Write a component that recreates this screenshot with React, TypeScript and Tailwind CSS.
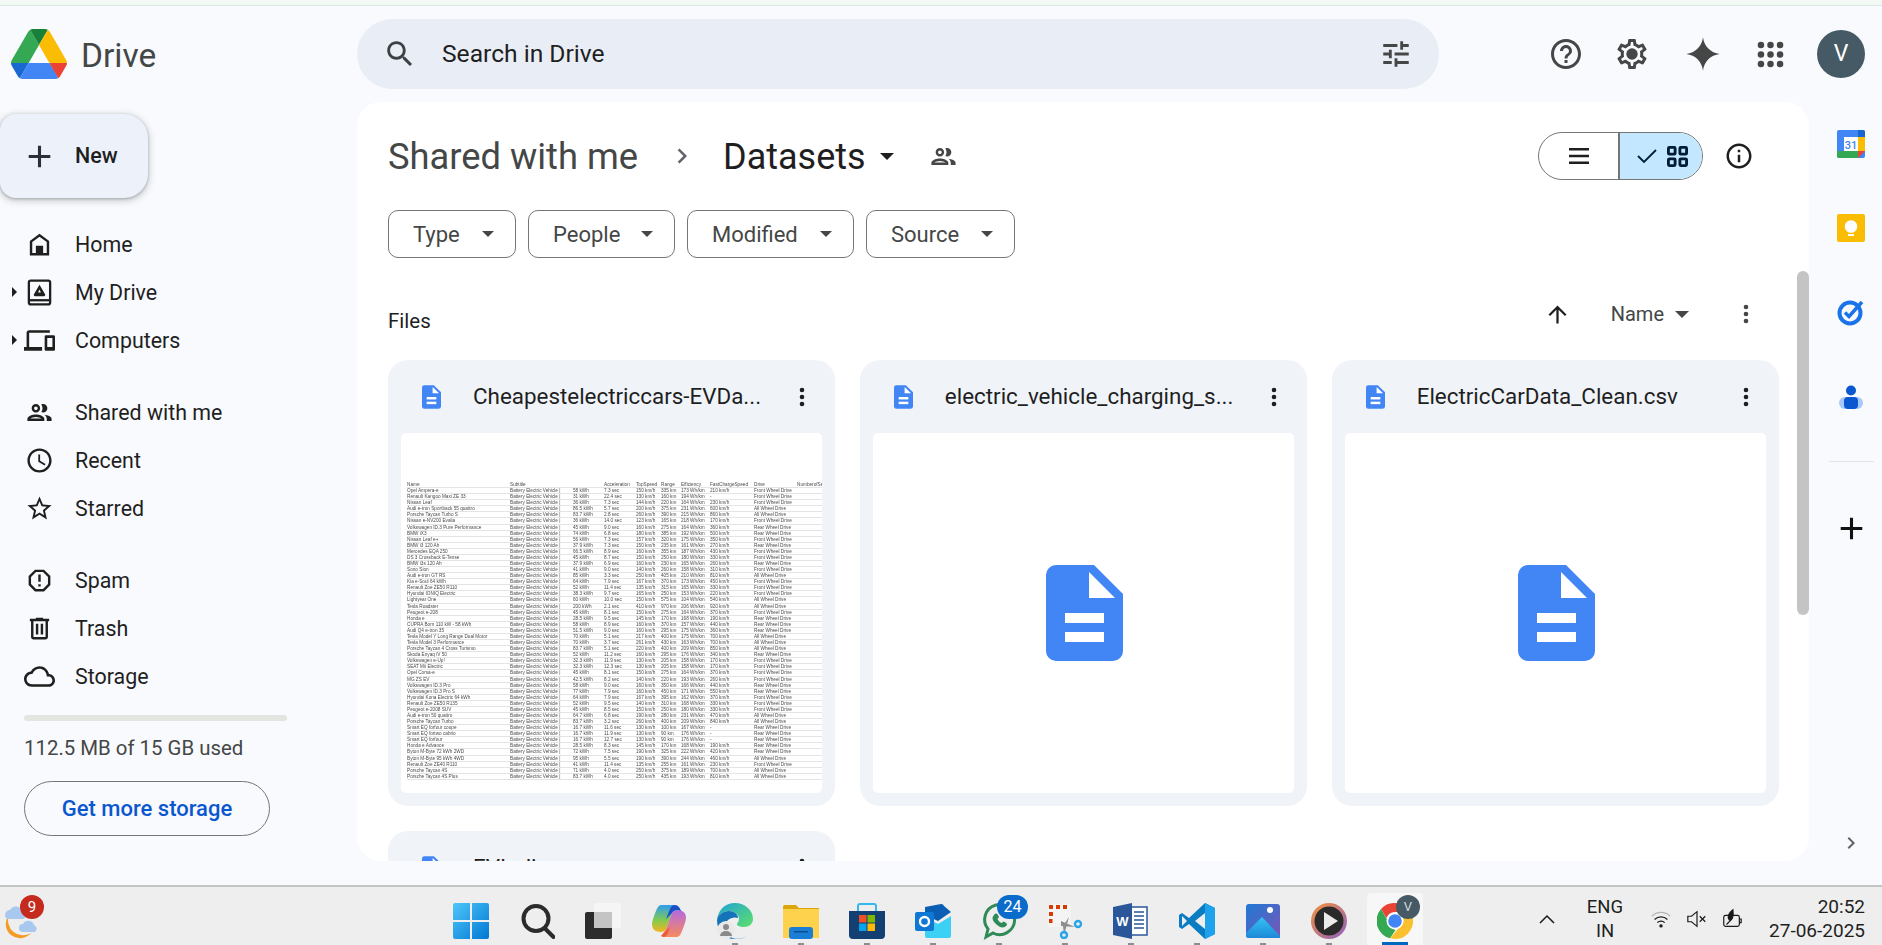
import React from "react";

const P = {
  home: "M12 3 4 9v12h16V9l-8-6zm6 16h-3v-6H9v6H6v-9l6-4.5 6 4.5v9z",
  devices: "M4 6h16V4H4c-1.1 0-2 .9-2 2v11H0v3h14v-3H4V6zm19 2h-6c-.55 0-1 .45-1 1v10c0 .55.45 1 1 1h6c.55 0 1-.45 1-1V9c0-.55-.45-1-1-1zm-1 9h-4v-7h4v7z",
  people: "M9 13.75c-2.34 0-7 1.17-7 3.5V19h14v-1.75c0-2.33-4.66-3.5-7-3.5zM4.34 17c.84-.58 2.87-1.25 4.66-1.25s3.82.67 4.66 1.25H4.34zM9 12c1.93 0 3.5-1.57 3.5-3.5S10.93 5 9 5 5.5 6.57 5.5 8.5 7.07 12 9 12zm0-5c.83 0 1.5.67 1.5 1.5S9.83 10 9 10s-1.5-.67-1.5-1.5S8.17 7 9 7zm7.04 6.81c1.16.84 1.96 1.96 1.96 3.44V19h4v-1.75c0-2.02-3.5-3.17-5.96-3.44zM15 12c1.93 0 3.5-1.57 3.5-3.5S16.93 5 15 5c-.54 0-1.04.13-1.5.35.63.89 1 1.98 1 3.15s-.37 2.26-1 3.15c.46.22.96.35 1.5.35z",
  clock: "M11.99 2C6.47 2 2 6.48 2 12s4.47 10 9.99 10C17.52 22 22 17.52 22 12S17.52 2 11.99 2zM12 20c-4.42 0-8-3.58-8-8s3.58-8 8-8 8 3.58 8 8-3.58 8-8 8zm.5-13H11v6l5.25 3.15.75-1.23-4.5-2.67z",
  star: "M22 9.24l-7.19-.62L12 2 9.19 8.63 2 9.24l5.46 4.73L5.82 21 12 17.27 18.18 21l-1.63-7.03L22 9.24zM12 15.4l-3.76 2.27 1-4.28-3.32-2.88 4.38-.38L12 6.1l1.71 4.04 4.38.38-3.32 2.88 1 4.28L12 15.4z",
  spam: "M15.73 3H8.27L3 8.27v7.46L8.27 21h7.46L21 15.73V8.27L15.73 3zM19 14.9 14.9 19H9.1L5 14.9V9.1L9.1 5h5.8L19 9.1v5.8zM11 7h2v6h-2zM11 15h2v2h-2z",
  trash: "M15 4V3H9v1H4v2h1v13c0 1.1.9 2 2 2h10c1.1 0 2-.9 2-2V6h1V4h-5zm2 15H7V6h10v13zM9 8h2v9H9zm4 0h2v9h-2z",
  cloud: "M12 6c2.62 0 4.88 1.86 5.39 4.43l.3 1.5 1.53.11c1.56.1 2.78 1.41 2.78 2.96 0 1.65-1.35 3-3 3H6c-2.21 0-4-1.79-4-4 0-2.05 1.53-3.76 3.56-3.97l1.07-.11.5-.95C8.08 7.14 9.94 6 12 6m0-2C9.11 4 6.6 5.64 5.35 8.04 2.34 8.36 0 10.91 0 14c0 3.31 2.69 6 6 6h13c2.76 0 5-2.24 5-5 0-2.64-2.05-4.78-4.65-4.96C18.67 6.59 15.64 4 12 4z",
  search: "M15.5 14h-.79l-.28-.27C15.41 12.59 16 11.11 16 9.5 16 5.91 13.09 3 9.5 3S3 5.91 3 9.5 5.91 16 9.5 16c1.61 0 3.09-.59 4.23-1.57l.27.28v.79l5 4.99L20.49 19l-4.99-5zm-6 0C7.01 14 5 11.99 5 9.5S7.01 5 9.5 5 14 7.01 14 9.5 11.99 14 9.5 14z",
  tune: "M3 17v2h6v-2H3zM3 5v2h10V5H3zm10 16v-2h8v-2h-8v-2h-2v6h2zM7 9v2H3v2h4v2h2V9H7zm14 4v-2H11v2h10zm-6-4h2V7h4V5h-4V3h-2v6z",
  help: "M11 18h2v-2h-2v2zm1-16C6.48 2 2 6.48 2 12s4.48 10 10 10 10-4.48 10-10S17.52 2 12 2zm0 18c-4.41 0-8-3.59-8-8s3.59-8 8-8 8 3.59 8 8-3.59 8-8 8zm0-14c-2.21 0-4 1.79-4 4h2c0-1.1.9-2 2-2s2 .9 2 2c0 2-3 1.75-3 5h2c0-2.25 3-2.5 3-5 0-2.21-1.79-4-4-4z",
  gear: "M19.43 12.98c.04-.32.07-.64.07-.98 0-.34-.03-.66-.07-.98l2.11-1.65c.19-.15.24-.42.12-.64l-2-3.46c-.09-.16-.26-.25-.44-.25-.06 0-.12.01-.17.03l-2.49 1c-.52-.4-1.08-.73-1.69-.98l-.38-2.65C14.46 2.18 14.25 2 14 2h-4c-.25 0-.46.18-.49.42l-.38 2.65c-.61.25-1.17.59-1.69.98l-2.49-1c-.06-.02-.12-.03-.18-.03-.17 0-.34.09-.43.25l-2 3.46c-.13.22-.07.49.12.64l2.11 1.65c-.04.32-.07.65-.07.98 0 .33.03.66.07.98l-2.11 1.65c-.19.15-.24.42-.12.64l2 3.46c.09.16.26.25.44.25.06 0 .12-.01.17-.03l2.49-1c.52.4 1.08.73 1.69.98l.38 2.65c.03.24.24.42.49.42h4c.25 0 .46-.18.49-.42l.38-2.65c.61-.25 1.17-.59 1.69-.98l2.49 1c.06.02.12.03.18.03.17 0 .34-.09.43-.25l2-3.46c.12-.22.07-.49-.12-.64l-2.11-1.65zm-1.98-1.71c.04.31.05.52.05.73 0 .21-.02.43-.05.73l-.14 1.13.89.7 1.08.84-.7 1.21-1.27-.51-1.04-.42-.9.68c-.43.32-.84.56-1.25.73l-1.06.43-.16 1.13-.2 1.35h-1.4l-.19-1.35-.16-1.13-1.06-.43c-.43-.18-.83-.41-1.23-.71l-.91-.7-1.06.43-1.27.51-.7-1.21 1.08-.84.89-.7-.14-1.13c-.03-.31-.05-.54-.05-.74s.02-.43.05-.73l.14-1.13-.89-.7-1.08-.84.7-1.21 1.27.51 1.04.42.9-.68c.43-.32.84-.56 1.25-.73l1.06-.43.16-1.13.2-1.35h1.39l.19 1.35.16 1.13 1.06.43c.43.18.83.41 1.23.71l.91.7 1.06-.43 1.27-.51.7 1.21-1.07.85-.89.7.14 1.13zM12 8.2a3.8 3.8 0 1 0 0 7.6 3.8 3.8 0 0 0 0-7.6z",
  spark: "M12 2c.6 5.4 4.6 9.4 10 10-5.4.6-9.4 4.6-10 10-.6-5.4-4.6-9.4-10-10 5.4-.6 9.4-4.6 10-10z",
  info: "M11 7h2v2h-2zm0 4h2v6h-2zm1-9C6.48 2 2 6.48 2 12s4.48 10 10 10 10-4.48 10-10S17.52 2 12 2zm0 18c-4.41 0-8-3.59-8-8s3.59-8 8-8 8 3.59 8 8-3.59 8-8 8z",
  up: "M4 12l1.41 1.41L11 7.83V20h2V7.83l5.58 5.59L20 12l-8-8-8 8z",
  plus: "M19 13h-6v6h-2v-6H5v-2h6V5h2v6h6v2z",
  right: "M8.59 16.59 13.17 12 8.59 7.41 10 6l6 6-6 6z",
};

function Mi({ d, cls, color = "#1f1f1f" }: { d: string; cls: string; color?: string }) {
  return (
    <svg viewBox="0 0 24 24" className={cls} fill={color}>
      <path d={d} fillRule="evenodd" />
    </svg>
  );
}

function Caret({ cls, color = "#444746" }: { cls: string; color?: string }) {
  return (
    <svg viewBox="0 0 10 5" className={cls} fill={color}>
      <path d="M0 0h10L5 5z" />
    </svg>
  );
}

function Dots({ color = "#1f1f1f" }: { color?: string }) {
  return (
    <svg viewBox="0 0 24 24" className="w-[24px] h-[24px] shrink-0" fill={color}>
      <circle cx="12" cy="5" r="2.3" />
      <circle cx="12" cy="12" r="2.3" />
      <circle cx="12" cy="19" r="2.3" />
    </svg>
  );
}

function DriveLogo() {
  return (
    <svg viewBox="0 0 87.3 78" className="w-[56px] h-[50px]">
      <path d="m6.6 66.85 3.85 6.65c.8 1.4 1.95 2.5 3.3 3.3l13.75-23.8h-27.5c0 1.55.4 3.1 1.2 4.5z" fill="#1967d2" />
      <path d="m43.65 25-13.75-23.8c-1.35.8-2.5 1.9-3.3 3.3l-25.4 44a9.06 9.06 0 0 0 -1.2 4.5h27.5z" fill="#34a853" />
      <path d="m73.55 76.8c1.35-.8 2.5-1.9 3.3-3.3l1.6-2.75 7.65-13.25c.8-1.4 1.2-2.95 1.2-4.5h-27.502l5.852 11.5z" fill="#ea4335" />
      <path d="m43.65 25 13.75-23.8c-1.35-.8-2.9-1.2-4.5-1.2h-18.5c-1.6 0-3.15.45-4.5 1.2z" fill="#188038" />
      <path d="m59.8 53h-32.3l-13.75 23.8c1.35.8 2.9 1.2 4.5 1.2h50.8c1.6 0 3.15-.45 4.5-1.2z" fill="#4285f4" />
      <path d="m73.4 26.5-12.7-22c-.8-1.4-1.95-2.5-3.3-3.3l-13.75 23.8 16.15 28h27.45c0-1.55-.4-3.1-1.2-4.5z" fill="#fbbc04" />
    </svg>
  );
}

function MyDriveIcon() {
  return (
    <svg viewBox="0 0 24 24" className="w-[29px] h-[29px]" fill="none" stroke="#1f1f1f" strokeWidth="1.9">
      <rect x="3.2" y="2.2" width="17.6" height="19.6" rx="1.6" />
      <path d="M3.2 18.4h17.6" />
      <path d="M12 5.5 16.6 13.500a1 1 0 0 1-.9 1.500H8.300a1 1 0 0 1-.9-1.500z" fill="#1f1f1f" stroke="none" />
      <path d="M12 9.500 13.200 12h-2.400z" fill="#f8fafd" stroke="none" />
    </svg>
  );
}

function DocIcon({ cls }: { cls: string }) {
  return (
    <svg viewBox="0 0 77 96" className={cls}>
      <path d="M10 0H48L77 29V86a10 10 0 0 1-10 10H10A10 10 0 0 1 0 86V10A10 10 0 0 1 10 0Z" fill="#4285f4" />
      <path d="M43 7V33H69Z" fill="#fff" />
      <rect x="19" y="48" width="39" height="10" fill="#fff" />
      <rect x="19" y="67" width="39" height="10" fill="#fff" />
    </svg>
  );
}

const NAV = [
  { items: [
    { label: "Home", icon: <Mi d={P.home} cls="w-[29px] h-[29px]" /> },
    { label: "My Drive", caret: true, icon: <MyDriveIcon /> },
    { label: "Computers", caret: true, icon: <Mi d={P.devices} cls="w-[31px] h-[31px]" /> },
  ] },
  { items: [
    { label: "Shared with me", icon: <Mi d={P.people} cls="w-[29px] h-[29px]" /> },
    { label: "Recent", icon: <Mi d={P.clock} cls="w-[29px] h-[29px]" /> },
    { label: "Starred", icon: <Mi d={P.star} cls="w-[29px] h-[29px]" /> },
  ] },
  { items: [
    { label: "Spam", icon: <Mi d={P.spam} cls="w-[29px] h-[29px]" /> },
    { label: "Trash", icon: <Mi d={P.trash} cls="w-[29px] h-[29px]" /> },
    { label: "Storage", icon: <Mi d={P.cloud} cls="w-[31px] h-[31px]" /> },
  ] },
];

function Sidebar() {
  return (
    <aside className="w-[357px] shrink-0 flex flex-col">
      <div className="h-[72px] mt-[12px] pl-[11px] flex items-center">
        <DriveLogo />
        <span className="ml-[14px] text-[33.5px] text-[#444746] leading-none relative top-[2px]">Drive</span>
      </div>
      <div className="mt-[24px] w-[148px] h-[84px] rounded-r-[24px] rounded-l-[16px] bg-[#edf2fa] shadow-[0_2px_6px_2px_rgba(60,64,67,0.18),0_1px_3px_rgba(60,64,67,0.35)] flex items-center pl-[25px]">
        <Mi d={P.plus} cls="w-[37px] h-[37px] shrink-0 -ml-[4px]" color="#2a2f3a" />
        <span className="ml-[17px] text-[21.5px] text-[#1f1f1f] font-medium">New</span>
      </div>
      <nav className="mt-[22px] flex flex-col gap-[24px]">
        {NAV.map((g, i) => (
          <div key={i} className="flex flex-col">
            {g.items.map((it) => (
              <div key={it.label} className="h-[48px] flex items-center text-[21.4px] text-[#1f1f1f]">
                <div className="w-[24px] pl-[12px] shrink-0">
                  {it.caret && (
                    <svg viewBox="0 0 5 10" className="w-[5px] h-[10px]" fill="#1f1f1f"><path d="M0 0l5 5-5 5z" /></svg>
                  )}
                </div>
                <div className="w-[31px] flex justify-center shrink-0">{it.icon}</div>
                <span className="ml-[20px] relative top-[1px]">{it.label}</span>
              </div>
            ))}
          </div>
        ))}
      </nav>
      <div className="mt-[15px] ml-[24px] w-[263px] h-[6px] rounded-full bg-[#e3e5e1]" />
      <div className="mt-[13px] ml-[24px] text-[20.4px] leading-[28px] text-[#444746]">112.5 MB of 15 GB used</div>
      <div className="mt-[19px] ml-[24px] w-[246px] h-[55px] rounded-full border border-[#747775] flex items-center justify-center text-[22px] font-medium text-[#0b57d0]">
        Get more storage
      </div>
    </aside>
  );
}

function Header() {
  return (
    <header className="h-[96px] shrink-0 flex items-center">
      <div className="w-[1082px] h-[70px] -mt-[1px] rounded-full bg-[#e9eef6] flex items-center pl-[26px] pr-[26px]">
        <Mi d={P.search} cls="w-[34px] h-[34px] shrink-0" color="#3c4043" />
        <span className="ml-[25px] text-[24.6px] text-[#1f1f1f] flex-1 relative top-[1px]">Search in Drive</span>
        <Mi d={P.tune} cls="w-[34px] h-[34px] shrink-0" color="#444746" />
      </div>
      <div className="ml-[109px] flex items-center">
        <Mi d={P.help} cls="w-[36px] h-[36px]" color="#444746" />
        <Mi d={P.gear} cls="w-[36px] h-[36px] ml-[30px]" color="#444746" />
        <Mi d={P.spark} cls="w-[40px] h-[40px] ml-[33px]" color="#444746" />
        <svg viewBox="0 0 24 24" className="w-[27px] h-[27px] ml-[34px]" fill="#444746">
          {[3.5, 12, 20.5].flatMap((y) => [3.5, 12, 20.5].map((x) => <circle key={x + "-" + y} cx={x} cy={y} r="2.9" />))}
        </svg>
        <div className="ml-[33px] w-[48px] h-[48px] rounded-full bg-[#455a64] text-white text-[23px] flex items-center justify-center">V</div>
      </div>
    </header>
  );
}

function Chip({ label, w }: { label: string; w: string }) {
  return (
    <div className={"h-[48px] rounded-[10px] border border-[#747775] flex items-center justify-between pl-[24px] pr-[21px] text-[22px] text-[#444746] " + w}>
      <span>{label}</span>
      <Caret cls="w-[12px] h-[6px]" />
    </div>
  );
}

const ROWS = [
  "Opel Ampera-e|58 kWh|7.3 sec|150 km/h|335 km|173 Wh/km|210 km/h|Front Wheel Drive",
  "Renault Kangoo Maxi ZE 33|31 kWh|22.4 sec|130 km/h|160 km|194 Wh/km|-|Front Wheel Drive",
  "Nissan Leaf|36 kWh|7.3 sec|144 km/h|220 km|164 Wh/km|230 km/h|Front Wheel Drive",
  "Audi e-tron Sportback 55 quattro|86.5 kWh|5.7 sec|200 km/h|375 km|231 Wh/km|600 km/h|All Wheel Drive",
  "Porsche Taycan Turbo S|83.7 kWh|2.8 sec|260 km/h|390 km|215 Wh/km|860 km/h|All Wheel Drive",
  "Nissan e-NV200 Evalia|36 kWh|14.0 sec|123 km/h|165 km|218 Wh/km|170 km/h|Front Wheel Drive",
  "Volkswagen ID.3 Pure Performance|45 kWh|9.0 sec|160 km/h|275 km|164 Wh/km|360 km/h|Rear Wheel Drive",
  "BMW iX3|74 kWh|6.8 sec|180 km/h|385 km|192 Wh/km|500 km/h|Rear Wheel Drive",
  "Nissan Leaf e+|56 kWh|7.3 sec|157 km/h|320 km|175 Wh/km|350 km/h|Front Wheel Drive",
  "BMW i3 120 Ah|37.9 kWh|7.3 sec|150 km/h|235 km|161 Wh/km|270 km/h|Rear Wheel Drive",
  "Mercedes EQA 250|66.5 kWh|8.9 sec|160 km/h|355 km|187 Wh/km|430 km/h|Front Wheel Drive",
  "DS 3 Crossback E-Tense|45 kWh|8.7 sec|150 km/h|250 km|180 Wh/km|330 km/h|Front Wheel Drive",
  "BMW i3s 120 Ah|37.9 kWh|6.9 sec|160 km/h|230 km|165 Wh/km|260 km/h|Rear Wheel Drive",
  "Sono Sion|41 kWh|9.0 sec|140 km/h|260 km|158 Wh/km|310 km/h|Front Wheel Drive",
  "Audi e-tron GT RS|85 kWh|3.3 sec|250 km/h|405 km|210 Wh/km|810 km/h|All Wheel Drive",
  "Kia e-Soul 64 kWh|64 kWh|7.9 sec|167 km/h|370 km|173 Wh/km|450 km/h|Front Wheel Drive",
  "Renault Zoe ZE50 R110|52 kWh|11.4 sec|135 km/h|315 km|165 Wh/km|330 km/h|Front Wheel Drive",
  "Hyundai IONIQ Electric|38.3 kWh|9.7 sec|165 km/h|250 km|153 Wh/km|220 km/h|Front Wheel Drive",
  "Lightyear One|60 kWh|10.0 sec|150 km/h|575 km|104 Wh/km|540 km/h|All Wheel Drive",
  "Tesla Roadster|200 kWh|2.1 sec|410 km/h|970 km|206 Wh/km|920 km/h|All Wheel Drive",
  "Peugeot e-208|45 kWh|8.1 sec|150 km/h|275 km|164 Wh/km|370 km/h|Front Wheel Drive",
  "Honda e|28.5 kWh|9.5 sec|145 km/h|170 km|168 Wh/km|190 km/h|Rear Wheel Drive",
  "CUPRA Born 110 kW - 58 kWh|58 kWh|8.9 sec|160 km/h|370 km|157 Wh/km|440 km/h|Rear Wheel Drive",
  "Audi Q4 e-tron 35|51.5 kWh|9.0 sec|160 km/h|295 km|175 Wh/km|360 km/h|Rear Wheel Drive",
  "Tesla Model Y Long Range Dual Motor|70 kWh|5.1 sec|217 km/h|400 km|175 Wh/km|700 km/h|All Wheel Drive",
  "Tesla Model 3 Performance|70 kWh|3.7 sec|261 km/h|430 km|163 Wh/km|700 km/h|All Wheel Drive",
  "Porsche Taycan 4 Cross Turismo|83.7 kWh|5.1 sec|220 km/h|400 km|209 Wh/km|850 km/h|All Wheel Drive",
  "Skoda Enyaq iV 50|52 kWh|11.2 sec|160 km/h|295 km|176 Wh/km|340 km/h|Rear Wheel Drive",
  "Volkswagen e-Up!|32.3 kWh|11.9 sec|130 km/h|205 km|158 Wh/km|170 km/h|Front Wheel Drive",
  "SEAT Mii Electric|32.3 kWh|12.3 sec|130 km/h|205 km|158 Wh/km|170 km/h|Front Wheel Drive",
  "Opel Corsa-e|45 kWh|8.1 sec|150 km/h|275 km|164 Wh/km|370 km/h|Front Wheel Drive",
  "MG ZS EV|42.5 kWh|8.2 sec|140 km/h|220 km|193 Wh/km|260 km/h|Front Wheel Drive",
  "Volkswagen ID.3 Pro|58 kWh|9.0 sec|160 km/h|350 km|166 Wh/km|440 km/h|Rear Wheel Drive",
  "Volkswagen ID.3 Pro S|77 kWh|7.9 sec|160 km/h|450 km|171 Wh/km|550 km/h|Rear Wheel Drive",
  "Hyundai Kona Electric 64 kWh|64 kWh|7.9 sec|167 km/h|395 km|162 Wh/km|370 km/h|Front Wheel Drive",
  "Renault Zoe ZE50 R135|52 kWh|9.5 sec|140 km/h|310 km|168 Wh/km|330 km/h|Front Wheel Drive",
  "Peugeot e-2008 SUV|45 kWh|8.5 sec|150 km/h|250 km|180 Wh/km|330 km/h|Front Wheel Drive",
  "Audi e-tron 50 quattro|64.7 kWh|6.8 sec|190 km/h|280 km|231 Wh/km|470 km/h|All Wheel Drive",
  "Porsche Taycan Turbo|83.7 kWh|3.2 sec|260 km/h|400 km|209 Wh/km|840 km/h|All Wheel Drive",
  "Smart EQ forfour coupe|16.7 kWh|11.6 sec|130 km/h|100 km|167 Wh/km|-|Rear Wheel Drive",
  "Smart EQ fortwo cabrio|16.7 kWh|11.9 sec|130 km/h|90 km|176 Wh/km|-|Rear Wheel Drive",
  "Smart EQ forfour|16.7 kWh|12.7 sec|130 km/h|90 km|176 Wh/km|-|Rear Wheel Drive",
  "Honda e Advance|28.5 kWh|8.3 sec|145 km/h|170 km|168 Wh/km|190 km/h|Rear Wheel Drive",
  "Byton M-Byte 72 kWh 2WD|72 kWh|7.5 sec|190 km/h|325 km|222 Wh/km|420 km/h|Rear Wheel Drive",
  "Byton M-Byte 95 kWh 4WD|95 kWh|5.5 sec|190 km/h|390 km|244 Wh/km|460 km/h|All Wheel Drive",
  "Renault Zoe ZE40 R110|41 kWh|11.4 sec|135 km/h|255 km|161 Wh/km|230 km/h|Front Wheel Drive",
  "Porsche Taycan 4S|71 kWh|4.0 sec|250 km/h|375 km|189 Wh/km|700 km/h|All Wheel Drive",
  "Porsche Taycan 4S Plus|83.7 kWh|4.0 sec|250 km/h|435 km|193 Wh/km|810 km/h|All Wheel Drive",
];

const GRID = "grid grid-cols-[103px_63px_31px_32px_25px_20px_29px_44px_43px_26px] h-[6.08px] border-b border-[#e4e4e4] text-[#4a4a4a] whitespace-nowrap overflow-hidden";

function Thumbnail() {
  return (
    <div className="pt-[49px] pl-[6px] text-[4.7px] leading-[6px] blur-[0.5px] font-['Liberation_Sans',sans-serif] h-full overflow-hidden">
      <div className={GRID}>
        {["Name", "Subtitle", "", "Acceleration", "TopSpeed", "Range", "Efficiency", "FastChargeSpeed", "Drive", "NumberofSe"].map((c, i) => (
          <span key={i} className="overflow-hidden">{c}</span>
        ))}
      </div>
      {ROWS.map((r) => {
        const c = r.split("|");
        return (
          <div key={r} className={GRID}>
            <span className="overflow-hidden">{c[0]}</span>
            <span className="overflow-hidden">Battery Electric Vehicle |</span>
            {c.slice(1).map((v, i) => <span key={i} className="overflow-hidden">{v}</span>)}
            <span />
          </div>
        );
      })}
    </div>
  );
}

function Card({ title, thumb }: { title: string; thumb?: boolean }) {
  return (
    <div className="h-[446px] rounded-[20px] bg-[#f0f4f9] px-[13px] pb-[13px] flex flex-col">
      <div className="h-[73px] shrink-0 flex items-center pl-[21px] pr-[8px]">
        <DocIcon cls="w-[19px] h-[24px] shrink-0" />
        <span className="ml-[32px] flex-1 text-[22.4px] text-[#1f1f1f] whitespace-nowrap overflow-hidden">{title}</span>
        <Dots />
      </div>
      <div className="flex-1 min-h-0 rounded-[5px] bg-white flex items-center justify-center overflow-hidden">
        {thumb ? <div className="w-full h-full"><Thumbnail /></div> : <DocIcon cls="w-[77px] h-[96px] ml-[3px]" />}
      </div>
    </div>
  );
}

function Panel() {
  return (
    <main className="relative w-[1452px] rounded-[24px] bg-white overflow-hidden pl-[31px]">
      <div className="mt-[30px] h-[48px] flex items-center pr-[55px]">
        <span className="text-[36.3px] text-[#444746] relative top-[1px]">Shared with me</span>
        <Mi d={P.right} cls="w-[30px] h-[30px] ml-[29px]" color="#5f6368" />
        <span className="ml-[26px] text-[36px] text-[#1f1f1f] relative top-[1px]">Datasets</span>
        <Caret cls="w-[14px] h-[7px] ml-[14px]" color="#1f1f1f" />
        <Mi d={P.people} cls="w-[29px] h-[29px] ml-[35px]" color="#444746" />
        <div className="ml-auto flex items-center">
          <div className="w-[165px] h-[48px] rounded-full border border-[#747775] flex overflow-hidden">
            <div className="w-[81px] flex items-center justify-center border-r-2 border-[#747775]">
              <svg viewBox="0 0 24 24" className="w-[24px] h-[24px]" fill="#1f1f1f"><path d="M2 4h20v2.6H2zM2 10.7h20v2.6H2zM2 17.4h20V20H2z" /></svg>
            </div>
            <div className="flex-1 bg-[#c2e7ff] flex items-center pl-[17px] gap-[10px]">
              <svg viewBox="0 0 20 16" className="w-[20px] h-[16px]" fill="none" stroke="#001d35" strokeWidth="1.8"><path d="M1 8l6 6L19 2" /></svg>
              <svg viewBox="0 0 22 22" className="w-[21px] h-[21px]" fill="none" stroke="#001d35" strokeWidth="3"><rect x="1.5" y="1.5" width="7" height="7" rx="1" /><rect x="13.5" y="1.5" width="7" height="7" rx="1" /><rect x="1.5" y="13.5" width="7" height="7" rx="1" /><rect x="13.5" y="13.5" width="7" height="7" rx="1" /></svg>
            </div>
          </div>
          <Mi d={P.info} cls="w-[30px] h-[30px] ml-[21px]" />
        </div>
      </div>
      <div className="mt-[30px] flex gap-[12px]">
        <Chip label="Type" w="w-[128px]" />
        <Chip label="People" w="w-[147px]" />
        <Chip label="Modified" w="w-[167px]" />
        <Chip label="Source" w="w-[149px]" />
      </div>
      <div className="mt-[40px] h-[40px] flex items-center pr-[51px]">
        <span className="text-[20.5px] text-[#1f1f1f] relative top-[3px]">Files</span>
        <div className="ml-auto flex items-center -mt-[8px]">
          <Mi d={P.up} cls="w-[27px] h-[27px]" />
          <span className="ml-[40px] text-[20px] text-[#444746]">Name</span>
          <Caret cls="w-[14px] h-[7px] ml-[11px]" />
          <div className="ml-[45px]"><Dots color="#444746" /></div>
        </div>
      </div>
      <div className="mt-[22px] grid grid-cols-3 gap-[25px] w-[1390.5px]">
        <Card title="Cheapestelectriccars-EVDa..." thumb />
        <Card title="electric_vehicle_charging_s..." />
        <Card title="ElectricCarData_Clean.csv" />
        <Card title="EVIndia.csv" />
      </div>
      <div className="absolute right-0 top-[169px] w-[12px] h-[344px] rounded-full bg-[#c4c4c4]" />
    </main>
  );
}

function Rail() {
  return (
    <div className="flex-1 flex flex-col items-center relative pl-[11px]">
      <svg viewBox="0 0 28 28" className="w-[28px] h-[28px] mt-[28px]">
        <rect width="28" height="28" rx="2" fill="#4285f4" />
        <path d="M21 0h5a2 2 0 0 1 2 2v5h-7z" fill="#1967d2" />
        <rect x="21" y="7" width="7" height="14" fill="#fbbc04" />
        <path d="M0 21h21v7H2a2 2 0 0 1-2-2z" fill="#34a853" />
        <path d="M21 21h7l-7 7z" fill="#ea4335" />
        <rect x="7" y="7" width="14" height="14" fill="#fff" />
        <text x="14" y="18.5" textAnchor="middle" fontSize="11" fontWeight="500" fill="#4285f4">31</text>
      </svg>
      <svg viewBox="0 0 28 28" className="w-[28px] h-[28px] mt-[56px]">
        <rect width="28" height="28" rx="2" fill="#fbbc04" />
        <circle cx="14" cy="12.5" r="6.3" fill="#fff" />
        <rect x="11" y="20" width="6" height="2" fill="#fff" />
      </svg>
      <svg viewBox="0 0 28 28" className="w-[28px] h-[28px] mt-[56px]">
        <circle cx="13" cy="15" r="10.5" fill="none" stroke="#1a73e8" strokeWidth="4" />
        <path d="M8 14.5l4 4L25 4" fill="none" stroke="#1a73e8" strokeWidth="3.5" />
      </svg>
      <svg viewBox="0 0 28 28" className="w-[28px] h-[28px] mt-[58px]">
        <circle cx="14" cy="6.5" r="5" fill="#0b57d0" />
        <rect x="2" y="13" width="24" height="12" rx="6" fill="#a8c7fa" />
        <rect x="7" y="13" width="14" height="12" rx="4" fill="#0b57d0" />
      </svg>
      <div className="w-[45px] h-px bg-[#e3e5e8] mt-[49px]" />
      <Mi d={P.plus} cls="w-[37px] h-[37px] mt-[48px]" color="#111" />
      <Mi d={P.right} cls="absolute left-[30px] top-[729px] w-[24px] h-[24px]" color="#5f6368" />
    </div>
  );
}

function TaskIcon({ children, active, dot = true }: { children: React.ReactNode; active?: boolean; dot?: boolean }) {
  return (
    <div className="relative w-[66px] h-full flex items-center justify-center pt-[10px]">
      {active && <div className="absolute left-[5px] right-[5px] top-[6px] bottom-0 rounded-t-[4px] bg-[#f7f7f7]" />}
      <div className="relative">{children}</div>
      {active ? (
        <div className="absolute left-[20px] right-[20px] bottom-0 h-[3px] bg-[#0067c0]" />
      ) : dot ? (
        <div className="absolute left-[30px] w-[6px] h-[2px] bottom-0 bg-[#8e8e8e]" />
      ) : null}
    </div>
  );
}

function Taskbar() {
  return (
    <footer className="relative h-[60px] shrink-0 bg-[#eeeeee] border-t-2 border-[#c4c4c4] flex items-stretch">
      <div className="absolute left-[2px] top-[8px] w-[40px] h-[50px]">
        <svg viewBox="0 0 40 50" className="w-[40px] h-[50px]">
          <path d="M7 20a15 15 0 0 0 22 18 11 11 0 0 1-22-18z" fill="#f59a23" />
          <path d="M3 20a5 5 0 0 1 5-5 6.500 6.500 0 0 1 12 1 4 4 0 0 1 0 8H6a4 4 0 0 1-3-4z" fill="#a8c8ef" />
          <path d="M17 33a4 4 0 0 1 4-4 6 6 0 0 1 11 1 4 4 0 0 1 1 7H20a4 4 0 0 1-3-4z" fill="#a8c8ef" />
        </svg>
        <div className="absolute left-[18px] top-[0px] w-[24px] h-[24px] rounded-full bg-[#c42b1c] text-white text-[15px] flex items-center justify-center">9</div>
      </div>
      <div className="ml-[438px] flex items-stretch">
        <TaskIcon dot={false}>
          <svg viewBox="0 0 36 36" className="w-[36px] h-[36px]">
            <defs><linearGradient id="w" x1="0" y1="0" x2="1" y2="1"><stop offset="0" stopColor="#4fc6f9" /><stop offset="1" stopColor="#0078d4" /></linearGradient></defs>
            <path d="M2 0h15v17H0V2a2 2 0 0 1 2-2zM19 0h15a2 2 0 0 1 2 2v15H19zM0 19h17v17H2a2 2 0 0 1-2-2zM19 19h17v15a2 2 0 0 1-2 2H19z" fill="url(#w)" />
          </svg>
        </TaskIcon>
        <TaskIcon dot={false}>
          <svg viewBox="0 0 36 36" className="w-[36px] h-[36px]" fill="none" stroke="#2b2b2b" strokeWidth="4" strokeLinecap="round">
            <circle cx="17" cy="15.5" r="12.500" /><path d="M26.500 26l8 8" />
          </svg>
        </TaskIcon>
        <TaskIcon dot={false}>
          <svg viewBox="0 0 36 36" className="w-[36px] h-[36px]">
            <rect x="0" y="9" width="27" height="27" rx="2" fill="#2c2c2c" />
            <rect x="9" y="0" width="27" height="25" rx="2" fill="#f5f5f5" fillOpacity="0.9" />
            <rect x="9" y="9" width="18" height="16" fill="#c4c4c4" />
          </svg>
        </TaskIcon>
        <TaskIcon dot={false}>
          <svg viewBox="0 0 36 36" className="w-[36px] h-[36px]">
            <defs>
              <linearGradient id="c1" x1="0" y1="0" x2="0" y2="1"><stop offset="0" stopColor="#2f9cf0" /><stop offset="0.55" stopColor="#7ecb52" /><stop offset="1" stopColor="#f4b41a" /></linearGradient>
              <linearGradient id="c2" x1="0" y1="0" x2="0" y2="1"><stop offset="0" stopColor="#b36ae0" /><stop offset="1" stopColor="#f88a5c" /></linearGradient>
            </defs>
            <path d="M10 2h14l-9 24c-1 2-3 3-5 3-6 0-9-3-9-8 0-3 2-8 4-13 1-3 3-6 5-6z" fill="url(#c1)" />
            <path d="M26 34H12l9-24c1-2 3-3 5-3 6 0 9 3 9 8 0 3-2 8-4 13-1 3-3 6-5 6z" fill="url(#c2)" />
            <path d="M24 2c-3 0-4 2-5 4l-4 10 6-6c1-2 3-3 6-3l3 1c-1-3-3-6-6-6z" fill="#1b4fc8" />
            <path d="M12 34c3 0 4-2 5-4l2-6-5 4-4 5z" fill="#ef5a3c" />
          </svg>
        </TaskIcon>
        <TaskIcon>
          <svg viewBox="0 0 36 36" className="w-[36px] h-[36px]">
            <defs><linearGradient id="e" x1="0" y1="0" x2="1" y2="1"><stop offset="0" stopColor="#1fa3d6" /><stop offset="1" stopColor="#5fe06a" /></linearGradient></defs>
            <path d="M18 0c10 0 18 7 18 16 0 5-4 8-9 8-4 0-7-1-7-3 0-1 2-2 2-5 0-5-5-8-10-8C7 8 2 11 0 17 1 7 8 0 18 0z" fill="url(#e)" />
            <path d="M0 17c1-5 6-9 12-9 5 0 9 3 9 7-6-2-13 2-13 9 0 6 5 12 13 12 3 0 6-1 9-3-3 2-7 3-12 3C8 36 0 29 0 17z" fill="#1473b9" />
            <circle cx="9" cy="27" r="9" fill="#e9e9e9" />
            <circle cx="9" cy="24" r="3" fill="#8a8a8a" />
            <path d="M3 33a6 5 0 0 1 12 0z" fill="#8a8a8a" />
          </svg>
        </TaskIcon>
        <TaskIcon>
          <svg viewBox="0 0 36 36" className="w-[36px] h-[36px]">
            <path d="M0 4a2 2 0 0 1 2-2h11l3 3h20v4H0z" fill="#dba60b" />
            <path d="M0 6h36v29H0z" fill="#ffd24d" />
            <rect x="6" y="24" width="24" height="12" rx="3" fill="#1a7fd4" />
            <rect x="11" y="28" width="14" height="1.5" fill="#0b4f8f" />
          </svg>
        </TaskIcon>
        <TaskIcon>
          <svg viewBox="0 0 36 36" className="w-[36px] h-[36px]">
            <path d="M9 8V3a2 2 0 0 1 2-2h14a2 2 0 0 1 2 2v5" fill="none" stroke="#35b8f0" strokeWidth="2" />
            <path d="M0 8h36v24a4 4 0 0 1-4 4H4a4 4 0 0 1-4-4z" fill="#143f73" />
            <rect x="10" y="12" width="7.5" height="7.5" fill="#f25022" />
            <rect x="18.5" y="12" width="7.5" height="7.5" fill="#7fba00" />
            <rect x="10" y="20.5" width="7.5" height="7.5" fill="#00a4ef" />
            <rect x="18.5" y="20.5" width="7.5" height="7.5" fill="#ffb900" />
          </svg>
        </TaskIcon>
        <TaskIcon>
          <svg viewBox="0 0 36 36" className="w-[36px] h-[36px]">
            <path d="M10 4 26 1a3 3 0 0 1 3 2l7 6-13 9L10 12z" fill="#0a5fb4" />
            <path d="M10 14l13 7 13-8v20a2 2 0 0 1-2 2H12a2 2 0 0 1-2-2z" fill="#3dd0f5" />
            <rect x="0" y="9" width="19" height="19" rx="2" fill="#0f78d4" />
            <circle cx="9.5" cy="18.5" r="4.5" fill="none" stroke="#fff" strokeWidth="2.4" />
          </svg>
        </TaskIcon>
        <TaskIcon>
          <svg viewBox="0 0 36 36" className="w-[36px] h-[36px] overflow-visible">
            <path d="M5 34l2-8a15 15 0 1 1 5 4z" fill="none" stroke="#2e8b57" strokeWidth="3" />
            <path d="M13 12c1-2 3-2 4 0l1 2-1.5 2c1 2 2 3 4 4l2-1.500 2 1c2 1 2 3 0 4-3 2-6 1-10-3-3-3-4-6-1.500-8.500z" fill="#2e8b57" />
          </svg>
          <div className="absolute -top-[8px] left-[16px] w-[31px] h-[24px] rounded-full bg-[#0b6bcb] text-white text-[16px] leading-none flex items-center justify-center">24</div>
        </TaskIcon>
        <TaskIcon>
          <svg viewBox="0 0 36 36" className="w-[36px] h-[36px]">
            <rect x="1" y="1" width="23" height="23" rx="3" fill="#f4f4f4" />
            <path d="M2 2h4v4H2zM9 2h4v4H9zM16 2h4v4h-4zM2 9h4v4H2zM2 16h3.500v4H2z" fill="#d83b01" />
            <path d="M14 18l14 6-14-1zM22 14l-5 18-1-9z" fill="#8d8d8d" />
            <circle cx="31" cy="21" r="3" fill="none" stroke="#2aa4e8" strokeWidth="2.400" />
            <circle cx="17" cy="32" r="3" fill="none" stroke="#2aa4e8" strokeWidth="2.400" />
          </svg>
        </TaskIcon>
        <TaskIcon>
          <svg viewBox="0 0 36 36" className="w-[36px] h-[36px]">
            <rect x="10" y="4" width="24" height="28" fill="#fff" stroke="#2b579a" strokeWidth="1.500" />
            <path d="M21 9h10M21 13h10M21 17h10M21 21h10M21 25h10" stroke="#2b579a" strokeWidth="1.500" />
            <path d="M0 4 19 0v36L0 32z" fill="#2b579a" />
            <text x="9.500" y="23" textAnchor="middle" fontSize="13" fontWeight="700" fill="#fff" fontFamily="Liberation Sans, sans-serif">W</text>
          </svg>
        </TaskIcon>
        <TaskIcon>
          <svg viewBox="0 0 36 36" className="w-[36px] h-[36px]">
            <path d="M26 0l10 5v26l-10 5-16-15-7 5-3-2v-12l3-2 7 5z" fill="#0a7cc4" />
            <path d="M26 0l10 5v26l-10 5z" fill="#1fa2ec" />
            <path d="M26 10v16l-10-8z" fill="#eeeeee" />
            <path d="M3 13l5 5-5 5z" fill="#eeeeee" />
          </svg>
        </TaskIcon>
        <TaskIcon>
          <svg viewBox="0 0 36 36" className="w-[36px] h-[36px]">
            <defs>
              <linearGradient id="ph" x1="0" y1="0" x2="1" y2="1"><stop offset="0" stopColor="#1f7ad4" /><stop offset="1" stopColor="#7a55b8" /></linearGradient>
              <linearGradient id="ph2" x1="0" y1="0" x2="0" y2="1"><stop offset="0" stopColor="#35c4f4" /><stop offset="1" stopColor="#1d88d8" /></linearGradient>
            </defs>
            <rect x="1" y="1" width="34" height="34" rx="3" fill="url(#ph)" />
            <circle cx="25" cy="7" r="3" fill="#fff" />
            <path d="M1 30 17 14l18 19v2H4a3 3 0 0 1-3-3z" fill="url(#ph2)" />
          </svg>
        </TaskIcon>
        <TaskIcon>
          <svg viewBox="0 0 36 36" className="w-[36px] h-[36px]">
            <defs><linearGradient id="pl" x1="0" y1="0" x2="1" y2="1"><stop offset="0" stopColor="#f7923a" /><stop offset="1" stopColor="#8d5fc4" /></linearGradient></defs>
            <circle cx="18" cy="18" r="18" fill="url(#pl)" />
            <circle cx="18" cy="18" r="14.500" fill="#2a2a2a" />
            <path d="M13 9l14 9-14 9z" fill="#eaeaea" />
          </svg>
        </TaskIcon>
        <TaskIcon active>
          <svg viewBox="0 0 36 36" className="w-[36px] h-[36px]">
            <path d="M18 0a18 18 0 0 1 15.600 9H18a9 9 0 0 0-8.500 6L4 6A18 18 0 0 1 18 0z" fill="#ea4335" />
            <path d="M4 6l9 15.500a9 9 0 0 0 5.500 5.500L13 35.300A18 18 0 0 1 4 6z" fill="#34a853" />
            <path d="M33.600 9A18 18 0 0 1 18 36l-5-.7 9.500-11A9 9 0 0 0 25.500 13z" fill="#fbc02d" />
            <circle cx="18" cy="18" r="8.500" fill="#fff" />
            <circle cx="18" cy="18" r="6.800" fill="#4285f4" />
          </svg>
          <div className="absolute -top-[8px] left-[19px] w-[24px] h-[24px] rounded-full bg-[#455a64] text-[#cfd8dc] text-[13px] flex items-center justify-center">V</div>
        </TaskIcon>
      </div>
      <div className="ml-[111px] flex items-center text-[#1f1f1f] pt-[6px]">
        <svg viewBox="0 0 16 10" className="w-[16px] h-[10px]" fill="none" stroke="#1a1a1a" strokeWidth="1.500"><path d="M1 9l7-7 7 7" /></svg>
        <div className="ml-[28px] w-[44px] text-center text-[18.5px] leading-[24px]"><div>ENG</div><div>IN</div></div>
        <svg viewBox="0 0 24 24" className="ml-[23px] w-[22px] h-[22px]" fill="none" stroke="#1a1a1a" strokeWidth="1.300">
          <path d="M2 9a14 14 0 0 1 20 0" stroke="#b5b5b5" /><path d="M5 12.500a10 10 0 0 1 14 0" /><path d="M8 16a5.500 5.500 0 0 1 8 0" /><circle cx="12" cy="19.500" r="1.200" fill="#1a1a1a" />
        </svg>
        <svg viewBox="0 0 24 24" className="ml-[14px] w-[22px] h-[22px]" fill="none" stroke="#1a1a1a" strokeWidth="1.300">
          <path d="M2 9v6h4l6 5V4L6 9z" /><path d="M15 9l6 6M21 9l-6 6" />
        </svg>
        <svg viewBox="0 0 24 24" className="ml-[13px] w-[22px] h-[22px]" fill="none" stroke="#1a1a1a" strokeWidth="1.300">
          <rect x="3" y="8" width="17" height="12" rx="2" /><path d="M20 12h2v4h-2" /><path d="M13 2c-5 4-6 8-4 11 3 1 5-3 4-11z" fill="#1a1a1a" /><path d="M6 18l5-5" />
        </svg>
        <div className="w-[122px] text-right text-[19px] leading-[24px]"><div>20:52</div><div>27-06-2025</div></div>
      </div>
    </footer>
  );
}

export default function App() {
  return (
    <div className="w-[1882px] h-[945px] overflow-hidden flex flex-col bg-[#f8fafd] font-['Roboto','Liberation_Sans',sans-serif]">
      <div className="h-[6px] shrink-0 bg-[#f2f9f5] border-b border-[#d9ebe3]" />
      <div className="flex-1 min-h-0 flex">
        <Sidebar />
        <div className="flex-1 min-w-0 flex flex-col">
          <Header />
          <div className="flex-1 min-h-0 flex pb-[24px]">
            <Panel />
            <Rail />
          </div>
        </div>
      </div>
      <Taskbar />
    </div>
  );
}
